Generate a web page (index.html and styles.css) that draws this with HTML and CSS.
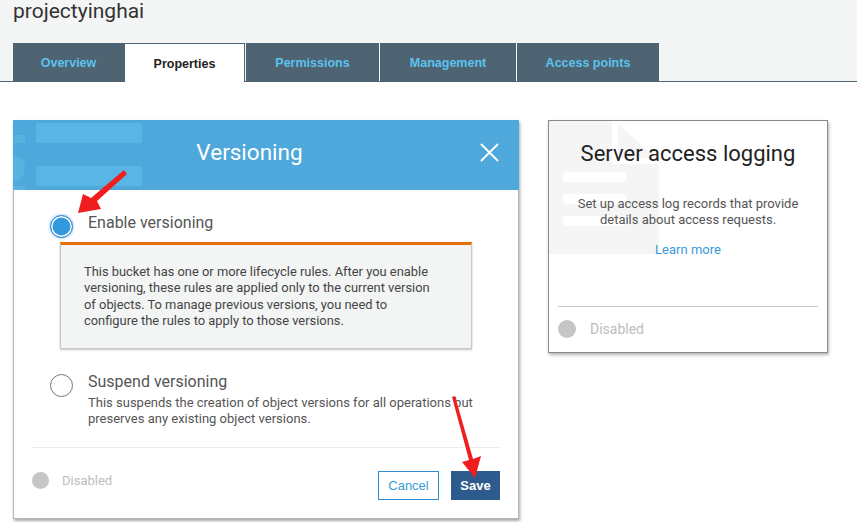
FILE: index.html
```html
<!DOCTYPE html>
<html lang="en">
<head>
<meta charset="utf-8">
<title>projectyinghai - Properties</title>
<link rel="stylesheet" href="styles.css">
</head>
<body>
<div class="page">
  <header class="top">
    <h1 class="bucket">projectyinghai</h1>
    <nav class="tabs">
      <a class="tab tab-overview">Overview</a>
      <a class="tab tab-properties active">Properties</a>
      <a class="tab tab-permissions">Permissions</a>
      <a class="tab tab-management">Management</a>
      <a class="tab tab-access">Access points</a>
    </nav>
  </header>

  <main class="content">
    <section class="modal">
      <div class="modal-head">
        <svg class="head-deco" width="140" height="70" viewBox="0 0 140 70">
          <rect x="23" y="3" width="106" height="20" rx="2" fill="#59b6e4"/>
          <rect x="23" y="46" width="106" height="20" rx="2" fill="#59b6e4"/>
          <rect x="0" y="15" width="12" height="8" fill="#57b2e0"/>
          <path d="M0 36 C8 36 12 40 12 47 C12 55 8 60 0 62 Z" fill="#57b2e0"/>
          <rect x="0" y="66" width="12" height="4" fill="#57b2e0"/>
        </svg>
        <h2 class="modal-title">Versioning</h2>
        <button class="close" aria-label="Close">
          <svg width="19" height="19" viewBox="0 0 19 19"><path d="M1 1 L18 18 M18 1 L1 18" stroke="#fff" stroke-width="1.8" fill="none"/></svg>
        </button>
      </div>

      <div class="modal-body">
        <div class="option">
          <span class="radio checked"></span>
          <div class="option-text">
            <div class="option-label">Enable versioning</div>
          </div>
        </div>
        <div class="warning">
          This bucket has one or more lifecycle rules. After you enable versioning, these rules are applied only to the current version of objects. To manage previous versions, you need to configure the rules to apply to those versions.
        </div>

        <div class="option option-2">
          <span class="radio"></span>
          <div class="option-text">
            <div class="option-label">Suspend versioning</div>
            <p class="option-desc">This suspends the creation of object versions for all operations but preserves any existing object versions.</p>
          </div>
        </div>
      </div>

      <div class="modal-foot">
        <div class="status"><span class="dot"></span><span class="status-text">Disabled</span></div>
        <div class="buttons">
          <button class="btn btn-cancel">Cancel</button>
          <button class="btn btn-save">Save</button>
        </div>
      </div>
    </section>

    <section class="card">
      <svg class="card-deco" width="112" height="133" viewBox="0 0 112 133">
        <path d="M0 0 H66 L110 40 V133 H0 Z" fill="#f5f5f5"/>
        <path d="M66 0 V40 H110" fill="none" stroke="#ffffff" stroke-width="6"/>
        <rect x="14" y="51" width="63" height="10" rx="3" fill="#fff"/>
        <rect x="14" y="73" width="63" height="10" rx="3" fill="#fff"/>
        <rect x="14" y="95" width="63" height="10" rx="3" fill="#fff"/>
      </svg>
      <div class="card-main">
        <h3 class="card-title">Server access logging</h3>
        <p class="card-desc">Set up access log records that provide details about access requests.</p>
        <a class="learn">Learn more</a>
      </div>
      <div class="card-foot">
        <span class="dot dot-lg"></span><span class="status-text status-lg">Disabled</span>
      </div>
    </section>
  </main>

  <svg class="annot" width="857" height="522" viewBox="0 0 857 522">
    <path d="M124 170 L127 174 L97 201 L101 209 L78 213 L83 194 L91 198 Z" fill="#f01e1e"/>
    <path d="M452 397 L455 396 L473 459 L481 456 L475 478 L462 462 L469 460 Z" fill="#f01e1e"/>
  </svg>
</div>
</body>
</html>
```

FILE: styles.css
```css
* { box-sizing: border-box; }
html, body { margin: 0; padding: 0; }
body {
  background: #ffffff;
  font-family: Roboto, "Liberation Sans", Arial, sans-serif;
  color: #444;
  width: 857px;
  height: 522px;
  overflow: hidden;
}
.page { position: relative; width: 857px; height: 522px; }

.top {
  display: flow-root;
  background: #f4f5f5;
  height: 82px;
  border-bottom: 1px solid #4f6574;
  padding-left: 13px;
}
.bucket {
  margin: 0;
  font-weight: 400;
  font-size: 21px;
  line-height: 22px;
  color: #333;
  height: 22px;
}
.tabs {
  display: flex;
  margin-top: 21px;
  height: 38px;
  gap: 1px;
}
.tab {
  display: flex;
  align-items: center;
  justify-content: center;
  height: 38px;
  background: #4e6472;
  color: #5cc2ee;
  font-family: "Liberation Sans", Arial, sans-serif;
  font-weight: 700;
  font-size: 12.5px;
  padding-top: 1px;
}
.tab-overview { width: 111px; }
.tab-properties { width: 121px; margin-left: -1px; }
.tab-permissions { width: 133px; }
.tab-management { width: 136px; }
.tab-access { width: 142px; }
.tab.active {
  background: #ffffff;
  color: #222;
  border: 1px solid #4f6574;
  border-bottom: none;
  height: 39px;
  padding-top: 2px;
}

.content {
  display: flex;
  align-items: flex-start;
  gap: 29px;
  padding: 38px 0 0 13px;
}

.modal {
  width: 506px;
  height: 399px;
  border: 1px solid #b5b5b5;
  box-shadow: 1px 2px 3px rgba(0,0,0,0.35);
  background: #fff;
  display: flex;
  flex-direction: column;
}
.modal-head {
  position: relative;
  height: 70px;
  background: #4fa8dc;
  display: flex;
  align-items: center;
  margin: -1px -1px 0 -1px;
  overflow: hidden;
}
.head-deco { position: absolute; left: 0; top: 0; }
.modal-title {
  position: relative;
  flex: 1;
  margin: -6px 0 0;
  padding-left: 20px;
  text-align: center;
  font-weight: 400;
  font-size: 22.5px;
  color: #fff;
}
.close {
  position: relative;
  background: none;
  border: none;
  padding: 0;
  width: 19px;
  height: 19px;
  margin: -6px 20px 0 14px;
  display: flex;
}

.modal-body {
  padding: 25px 0 0 36px;
  flex: 1;
}
.option {
  display: flex;
  align-items: flex-start;
  gap: 15px;
}
.radio {
  flex: none;
  width: 23px;
  height: 23px;
  border-radius: 50%;
  border: 1px solid #777;
  background: #fff;
}
.radio.checked {
  background: #3399dd;
  border: 1.5px solid #3d8fd6;
  box-shadow: inset 0 0 0 1.5px #fff, 0 0 2px 1px rgba(80,150,230,0.35);
}
.option-label {
  font-size: 16px;
  line-height: 20px;
  color: #555;
  margin-top: -2px;
}
.option-desc {
  margin: 3px 0 0;
  font-size: 13px;
  line-height: 16px;
  color: #555;
  width: 400px;
}
.warning {
  margin: 4px 0 0 10px;
  width: 412px;
  background: #f3f4f4;
  border: 1px solid #c8c8c8;
  border-top: 3px solid #e8700a;
  box-shadow: 0 1px 2px rgba(0,0,0,0.25);
  padding: 19px 34px 19px 23px;
  font-size: 12.9px;
  line-height: 16.3px;
  color: #444;
}
.option-2 { margin-top: 25px; }

.modal-foot {
  margin: 0 18px;
  border-top: 1px solid #ececec;
  height: 71px;
  display: flex;
  justify-content: space-between;
  align-items: flex-start;
  padding-top: 23px;
}
.status { display: flex; align-items: center; gap: 13px; margin-top: 1px; }
.dot {
  width: 17px;
  height: 17px;
  border-radius: 50%;
  background: #c6c6c6;
  flex: none;
}
.status-text {
  font-size: 13px;
  color: #bdbdbd;
}
.buttons { display: flex; gap: 12px; }
.btn {
  height: 29px;
  font-family: "Liberation Sans", Arial, sans-serif;
  font-size: 13px;
  padding: 0;
}
.btn-cancel {
  width: 61px;
  background: #fff;
  border: 1px solid #2b8fd2;
  color: #3a9ad8;
}
.btn-save {
  width: 49px;
  background: #2d5b8d;
  border: 1px solid #2d5b8d;
  color: #fff;
  font-weight: 700;
}

.card {
  position: relative;
  width: 280px;
  height: 233px;
  border: 1px solid #8a8a8a;
  box-shadow: 1px 2px 3px rgba(0,0,0,0.3);
  background: #fff;
  display: flex;
  flex-direction: column;
  padding: 0 9px;
}
.card-deco { position: absolute; left: 0; top: 0; }
.card-main {
  position: relative;
  flex: 1;
  text-align: center;
  padding-top: 20px;
}
.card-title {
  margin: 0;
  font-weight: 400;
  font-size: 22px;
  line-height: 26px;
  color: #222;
}
.card-desc {
  margin: 29px 8px 0;
  font-size: 13px;
  line-height: 16px;
  color: #555;
}
.learn {
  display: block;
  margin-top: 14px;
  font-size: 13px;
  line-height: 16px;
  color: #3a9ad9;
}
.card-foot {
  position: relative;
  border-top: 1px solid #c9c9c9;
  height: 46px;
  display: flex;
  align-items: center;
  gap: 14px;
  padding-bottom: 2px;
}
.dot-lg { width: 18px; height: 18px; }
.status-lg { font-size: 14px; }

.annot {
  position: absolute;
  left: 0;
  top: 0;
  pointer-events: none;
}
```
